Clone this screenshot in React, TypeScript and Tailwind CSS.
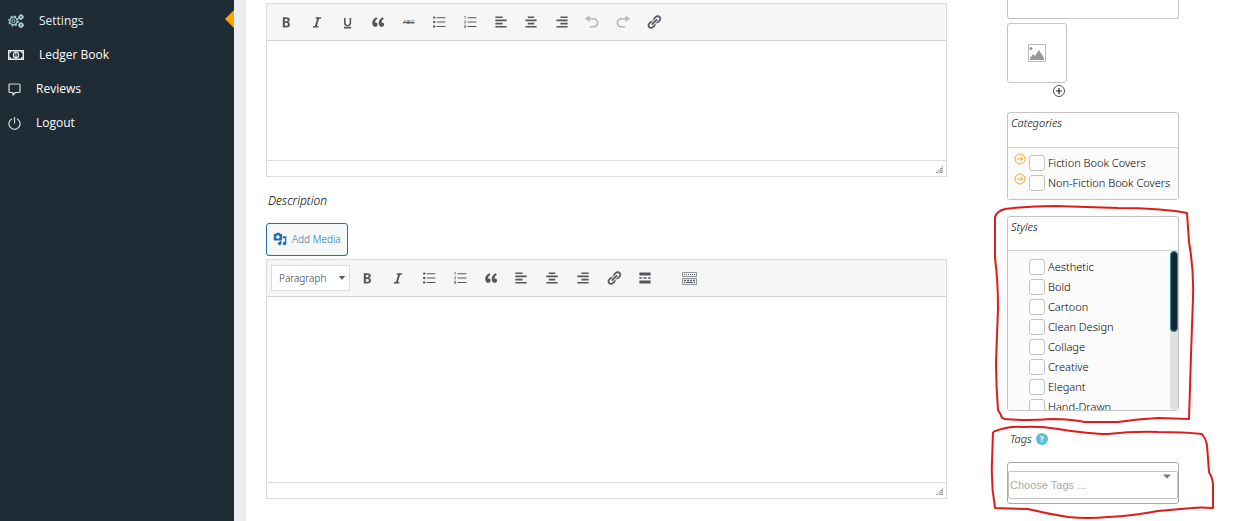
import type { ReactNode } from 'react';
import { FaCaretDown } from 'react-icons/fa';

type IconProps = { children: ReactNode; className?: string };

function Icon({ children, className = 'w-4 h-4' }: IconProps) {
  return (
    <svg viewBox="0 0 20 20" fill="currentColor" className={className} aria-hidden="true">
      {children}
    </svg>
  );
}

const icons: Record<string, ReactNode> = {
  Bold: (
    <path d="M6 4v13h4.54c1.37 0 2.46-.33 3.26-1 .8-.66 1.2-1.58 1.2-2.77 0-.84-.17-1.51-.51-2.01s-.9-.85-1.67-1.03v-.09c.57-.1 1.02-.4 1.36-.9s.51-1.13.51-1.91c0-1.14-.39-1.98-1.17-2.5C12.75 4.26 11.5 4 9.78 4H6zm2.57 5.15V6.26h1.36c.73 0 1.27.11 1.61.32.34.22.51.58.51 1.07 0 .54-.16.92-.47 1.15s-.82.35-1.51.35h-1.5zm0 2.19h1.6c1.44 0 2.16.53 2.16 1.61 0 .6-.17 1.05-.51 1.34s-.86.43-1.57.43H8.57v-3.38z" />
  ),
  Italic: <path d="M14.78 6h-2.13l-2.8 9h2.12l-.62 2H4.6l.62-2h2.14l2.8-9H8.03l.62-2h6.75z" />,
  Underline: (
    <path d="M14 5h-2v5.71c0 1.99-1.12 2.98-2.45 2.98-1.32 0-2.55-1-2.55-2.96V5H5v5.87c0 1.91 1 4.54 4.48 4.54 3.49 0 4.52-2.58 4.52-4.5V5zm0 13v-2H5v2h9z" />
  ),
  Blockquote: (
    <path d="M9.49 13.22c0-.74-.2-1.38-.61-1.9-.62-.78-1.83-.88-2.53-.72-.29-1.65 1.11-3.75 2.92-4.65L7.88 4c-2.73 1.3-5.42 4.28-4.96 8.05C3.21 14.43 4.59 16 6.54 16c.85 0 1.56-.25 2.12-.75s.83-1.18.83-2.03zm8.05 0c0-.74-.2-1.38-.61-1.9-.63-.78-1.83-.88-2.53-.72-.29-1.65 1.11-3.75 2.92-4.65L15.93 4c-2.73 1.3-5.41 4.28-4.95 8.05.29 2.38 1.66 3.95 3.61 3.95.85 0 1.56-.25 2.12-.75s.83-1.18.83-2.03z" />
  ),
  'Bulleted list': (
    <>
      <circle cx="4" cy="4.5" r="1.5" />
      <circle cx="4" cy="10" r="1.5" />
      <circle cx="4" cy="15.5" r="1.5" />
      <path d="M7 4h11v1.2H7zM7 9.4h11v1.2H7zM7 15h11v1.2H7z" />
    </>
  ),
  'Numbered list': (
    <>
      <path d="M7 4h11v1.2H7zM7 9.4h11v1.2H7zM7 15h11v1.2H7z" />
      <path
        d="M3 3l1-.5V6M2.8 8.5h1.6v1.4L3 11.3h1.7M2.8 14h1.7v1.5H3.2h1.3V17H2.8"
        fill="none"
        stroke="currentColor"
        strokeWidth="0.8"
      />
    </>
  ),
  'Align left': <path d="M12 5V3H3v2h9zm5 4V7H3v2h14zm-5 4v-2H3v2h9zm5 4v-2H3v2h14z" />,
  'Align center': <path d="M14 5V3H6v2h8zm3 4V7H3v2h14zm-3 4v-2H6v2h8zm3 4v-2H3v2h14z" />,
  'Align right': <path d="M17 5V3H8v2h9zm0 4V7H3v2h14zm0 4v-2H8v2h9zm0 4v-2H3v2h14z" />,
  Undo: <path d="M12 5H7V2L1 6l6 4V7h5c2.2 0 4 1.8 4 4s-1.8 4-4 4H7v2h5c3.3 0 6-2.7 6-6s-2.7-6-6-6z" />,
  Redo: <path d="M8 5h5V2l6 4-6 4V7H8c-2.2 0-4 1.8-4 4s1.8 4 4 4h5v2H8c-3.3 0-6-2.7-6-6s2.7-6 6-6z" />,
  'Insert link': (
    <path d="M17.74 2.76c1.68 1.69 1.68 4.41 0 6.1l-1.53 1.52c-1.12 1.12-2.7 1.47-4.14 1.09l2.62-2.61.76-.77.76-.76c.84-.84.84-2.2 0-3.04-.84-.85-2.2-.85-3.04 0l-.77.76-3.38 3.38c-.37-1.44-.02-3.02 1.1-4.14l1.52-1.53c1.69-1.68 4.42-1.68 6.1 0zM8.59 13.43l5.34-5.34c.42-.42.42-1.1 0-1.52-.44-.43-1.13-.39-1.53 0l-5.33 5.34c-.42.42-.42 1.1 0 1.52.44.43 1.13.39 1.52 0zm-.76 2.29l4.14-4.15c.38 1.44.03 3.02-1.09 4.14l-1.52 1.53c-1.69 1.68-4.41 1.68-6.1 0-1.68-1.68-1.68-4.42 0-6.1l1.53-1.52c1.12-1.12 2.7-1.47 4.14-1.1l-4.14 4.15c-.85.84-.85 2.2 0 3.05.84.84 2.2.84 3.04 0z" />
  ),
  'Read more': <path d="M3 3h14v4H3zM3 9h3v2H3zM8 9h4v2H8zM14 9h3v2h-3zM3 13h14v4H3z" />,
};

const basicTools = [
  'Bold',
  'Italic',
  'Underline',
  'Blockquote',
  'Strikethrough',
  'Bulleted list',
  'Numbered list',
  'Align left',
  'Align center',
  'Align right',
  'Undo',
  'Redo',
  'Insert link',
];

const richTools = [
  'Bold',
  'Italic',
  'Bulleted list',
  'Numbered list',
  'Blockquote',
  'Align left',
  'Align center',
  'Align right',
  'Insert link',
  'Read more',
];

const styleNames = [
  'Aesthetic',
  'Bold',
  'Cartoon',
  'Clean Design',
  'Collage',
  'Creative',
  'Elegant',
  'Hand-Drawn',
];

function ToolButton({ name }: { name: string }) {
  const disabled = name === 'Undo' || name === 'Redo';
  return (
    <button
      type="button"
      aria-label={name}
      disabled={disabled}
      className="flex h-7 items-center justify-center text-[#50575e] disabled:text-[#b5b8bb]"
    >
      {name === 'Strikethrough' ? (
        <span className="text-[6px] line-through">ABC</span>
      ) : (
        <Icon>{icons[name]}</Icon>
      )}
    </button>
  );
}

function Editor({ label, toolbar, bodyClass }: { label: string; toolbar: ReactNode; bodyClass: string }) {
  return (
    <div className="border border-[#dcdcdc] bg-white">
      <div className="flex h-[37px] items-center border-b border-[#d5d5d5] bg-[#f6f6f6] px-1">{toolbar}</div>
      <textarea aria-label={label} className={`block w-full resize-none p-2 outline-none ${bodyClass}`} />
      <div className="flex h-4 items-end justify-end border-t border-[#dcdcdc] p-[2px]">
        <svg viewBox="0 0 9 9" className="h-[9px] w-[9px]" fill="#a0a0a0" aria-hidden="true">
          <path d="M7 1h1v1H7zM5 3h3v1H5zM5 5h3v1H5zM3 5h1v1H3zM1 7h2v1H1zM4 7h4v1H4z" />
          <path d="M6 2h2v1H6zM4 4h4v1H4zM2 6h6v1H2z" opacity=".4" />
        </svg>
      </div>
    </div>
  );
}

function CheckRow({ name, arrow = false }: { name: string; arrow?: boolean }) {
  return (
    <label className="flex h-5 items-center text-[11px] font-light text-black">
      <span className="h-full w-[15px] text-[#f5a623]">
        {arrow && (
          <svg viewBox="0 0 12 12" className="h-3 w-3" fill="none" stroke="currentColor" aria-hidden="true">
            <circle cx="6" cy="6" r="5" />
            <path d="M3 6h5.5M6.3 3.6L8.7 6 6.3 8.4" />
          </svg>
        )}
      </span>
      <input
        type="checkbox"
        className="h-4 w-4 shrink-0 appearance-none rounded-[3px] border border-[#c4c4c4] bg-white checked:bg-[#1f2b35]"
      />
      <span className="ml-[3px] whitespace-nowrap">{name}</span>
    </label>
  );
}

function Sidebar() {
  return (
    <nav className="relative w-[234px] shrink-0 bg-[#1f2b35] pt-1 font-['Open_Sans',sans-serif] text-[12px] text-white">
      <a href="#settings" className="flex h-[34px] items-center gap-[15px] pl-2 text-[#e3f1f4]">
        <svg viewBox="0 0 16 14" className="h-[14px] w-4 text-[#a9cbd3]" fill="none" stroke="currentColor" aria-hidden="true">
          <circle cx="5.5" cy="7" r="3.7" strokeWidth="1.4" />
          <circle cx="5.5" cy="7" r="1.5" />
          <circle cx="5.5" cy="7" r="4.9" strokeWidth="1.2" strokeDasharray="2 1.85" />
          <circle cx="13" cy="3" r="1.7" strokeWidth="1.8" />
          <circle cx="13" cy="11" r="1.7" strokeWidth="1.8" />
          <path d="M10 3h1M15 3h1M13 0v1M13 5v1M10 11h1M15 11h1M13 8v1M13 13v1" />
        </svg>
        Settings
      </a>
      <svg viewBox="0 0 9 18" className="absolute right-0 top-[10px] h-[18px] w-[9px]" aria-hidden="true">
        <path d="M9 0v18L0 9z" fill="#ffa500" />
      </svg>
      <a href="#ledger" className="flex h-[34px] items-center gap-[15px] pl-2">
        <svg viewBox="0 0 16 10" className="h-[10px] w-4" fill="none" stroke="#e8ecec" aria-hidden="true">
          <path d="M.7.7h14.6v8.6H.7z" strokeWidth="1.4" />
          <path d="M1 3q2 0 2-2M15 3q-2 0-2-2M1 7q2 0 2 2M15 7q-2 0-2 2" />
          <ellipse cx="8" cy="5" rx="2.6" ry="2.9" strokeWidth="1.2" />
          <path d="M7 4l1-.6V7M7 7h2" strokeWidth=".8" />
        </svg>
        Ledger Book
      </a>
      <a href="#reviews" className="flex h-[34px] items-center gap-[15px] pl-2">
        <svg viewBox="0 0 13 13" className="h-[13px] w-[13px]" fill="none" stroke="#d5dada" strokeWidth="1.2" aria-hidden="true">
          <path d="M2 1h9q1 0 1 1v6.5q0 1-1 1H7.500L5 12V9.500H2q-1 0-1-1V2q0-1 1-1z" strokeLinejoin="round" />
        </svg>
        Reviews
      </a>
      <a href="#logout" className="flex h-[34px] items-center gap-[15px] pl-2">
        <svg viewBox="0 0 13 13" className="h-[13px] w-[13px]" fill="none" stroke="#d5dada" strokeWidth="1.2" aria-hidden="true">
          <path d="M4 1.700a5.600 5.600 0 1 0 5 0M6.500 0v6.500" />
        </svg>
        Logout
      </a>
    </nav>
  );
}

function RichToolbar() {
  return (
    <>
      <div className="relative">
        <select
          aria-label="Text format"
          className="block h-[26px] w-[79px] appearance-none border border-[#ddd] bg-white pl-[7px] text-[10px] font-light text-[#32373c]"
        >
          <option>Paragraph</option>
        </select>
        <svg viewBox="0 0 6 4" className="pointer-events-none absolute right-[5px] top-[11px] h-1 w-[6px]" fill="#50575e" aria-hidden="true">
          <path d="M0 0h6L3 4z" />
        </svg>
      </div>
      <div className="ml-[2px] grid w-[308px] grid-cols-10">
        {richTools.map((t) => (
          <ToolButton key={t} name={t} />
        ))}
      </div>
      <button type="button" aria-label="Toolbar toggle" className="ml-[22px] text-[#50575e]">
        <svg viewBox="0 0 15 13" className="h-[13px] w-[15px]" fill="none" stroke="currentColor" aria-hidden="true">
          <path d="M.5.5h14v4H.5zM.5 6.5h14v6H.5z" opacity=".6" />
          <path d="M2 2.5h11" strokeDasharray="1 1" />
          <path d="M2 8.5h11" strokeWidth="1.4" strokeDasharray="2 1" />
          <path d="M2 10.5h1M4 10.5h7M12 10.5h1" />
        </svg>
      </button>
    </>
  );
}

export default function App() {
  return (
    <div className="relative flex h-screen overflow-hidden bg-white font-['Noto_Sans',sans-serif] leading-4 text-black">
      <Sidebar />
      <div className="w-3 shrink-0 bg-[#ebebf0]" />
      <main className="flex min-w-0 flex-1 items-start gap-[60px] pl-5 pr-[59px]">
        <section className="min-w-0 flex-1 pt-[3px]">
          <Editor
            label="Short description"
            bodyClass="h-[119px]"
            toolbar={
              <div className="grid w-[398px] grid-cols-13">
                {basicTools.map((t) => (
                  <ToolButton key={t} name={t} />
                ))}
              </div>
            }
          />
          <h2 className="mt-4 pl-[2px] text-[12px] font-light italic">Description</h2>
          <button
            type="button"
            className="mt-[14px] flex h-[33px] items-center gap-[5px] rounded-[3px] border border-[#2271b1] bg-[#f6f7f7] px-[6px] pb-[2px] text-[10px] font-light text-[#2271b1]"
          >
            <Icon className="h-[14px] w-[14px]">
              <path d="M13 11V4c0-.55-.45-1-1-1h-1.67L9 1H5L3.67 3H2c-.55 0-1 .45-1 1v7c0 .55.45 1 1 1h10c.55 0 1-.45 1-1zM7 4.5c1.38 0 2.5 1.12 2.5 2.5S8.38 9.5 7 9.5 4.5 8.38 4.5 7 5.62 4.5 7 4.5zM14 6h5v10.5c0 1.38-1.12 2.5-2.5 2.5S14 17.88 14 16.5s1.12-2.5 2.5-2.5c.17 0 .34.02.5.05V9h-3V6zm-4 8.05V13h2v3.5c0 1.38-1.12 2.5-2.5 2.5S7 17.88 7 16.5 8.12 14 9.5 14c.17 0 .34.02.5.05z" />
            </Icon>
            Add Media
          </button>
          <div className="mt-[3px]">
            <Editor label="Description" bodyClass="h-[185px]" toolbar={<RichToolbar />} />
          </div>
        </section>

        <aside className="w-[172px] shrink-0">
          <div className="h-[19px] rounded-b-[3px] border border-t-0 border-[#c4c4c4]" />
          <div className="mt-1 w-[60px]">
            <button
              type="button"
              aria-label="Gallery image"
              className="flex h-[60px] w-full items-center justify-center rounded-[3px] border border-[#c4c4c4]"
            >
              <svg viewBox="0 0 18 18" className="h-[18px] w-[18px]" aria-hidden="true">
                <path d="M.5.5h17v17H.5z" fill="#fff" stroke="#bbb" />
                <circle cx="3" cy="4.5" r="1.5" fill="#999" />
                <path d="M2 16v-2l3-4 2 2 4-6 5 8v2z" fill="#999" />
              </svg>
            </button>
            <button type="button" aria-label="Add image" className="ml-auto mr-[2px] mt-[2px] block h-3 w-3">
              <svg viewBox="0 0 12 12" className="h-3 w-3" fill="none" stroke="#222" aria-hidden="true">
                <circle cx="6" cy="6" r="5.5" strokeWidth=".8" />
                <path d="M3 6h6M6 3v6" strokeWidth="1.2" />
              </svg>
            </button>
          </div>

          <fieldset className="mt-[15px] rounded-[3px] border border-[#c4c4c4] text-[11px]">
            <div className="h-[34px] pl-[3px] pt-[2px] font-light italic">Categories</div>
            <div className="border-t border-[#d5d5d5] bg-[#fbfbfb] pb-[6px] pl-[6px] pt-[5px]">
              <CheckRow name="Fiction Book Covers" arrow />
              <CheckRow name="Non-Fiction Book Covers" arrow />
            </div>
          </fieldset>

          <fieldset className="mt-4 rounded-[3px] border border-[#c4c4c4] text-[11px]">
            <div className="h-[33px] pl-[3px] pt-[2px] font-light italic">Styles</div>
            <div className="flex h-[160px] overflow-hidden border-t border-[#d5d5d5] bg-[#fbfbfb]">
              <div className="flex-1 overflow-hidden pl-[6px] pt-[6px]">
                {styleNames.map((name) => (
                  <CheckRow key={name} name={name} />
                ))}
              </div>
              <div className="w-2 rounded-full bg-[#e0e0e0]">
                <div className="h-[81px] rounded-full border border-[#2a8a9b] bg-[#162833]" />
              </div>
            </div>
          </fieldset>

          <div className="mt-5 flex items-center gap-1 pl-[3px] text-[11px]">
            <label htmlFor="tags" className="font-light italic">
              Tags
            </label>
            <button
              type="button"
              aria-label="Help"
              className="flex h-3 w-3 items-center justify-center rounded-full bg-[#5bc0de] text-[8px] font-bold text-white"
            >
              ?
            </button>
          </div>
          <div className="relative mt-[15px] rounded-[3px] border border-[#aaa] pb-1 pt-2">
            <input
              id="tags"
              placeholder="Choose Tags ..."
              className="block h-7 w-full rounded-[2px] border border-[#c4c4c4] pl-px font-['Liberation_Sans',sans-serif] text-[11px] outline-none placeholder:text-[#aaa]"
            />
            <FaCaretDown className="pointer-events-none absolute right-[5px] top-[7px] h-3 w-3 text-[#777]" />
          </div>
        </aside>
      </main>

      {/* hand-drawn markers around Styles and Tags */}
      <svg
        viewBox="0 0 228 316"
        className="pointer-events-none absolute right-[20px] top-[205px] h-[316px] w-[228px]"
        fill="none"
        stroke="#e01b1b"
        strokeWidth="2"
        strokeLinejoin="round"
        aria-hidden="true"
      >
        <path d="M5 53L5 12Q7 6 15 4Q38 1 65 1L128 3Q170 3 197 8L199 37Q204 65 203 93L201 150L199 214L168 213Q148 214 128 217L95 217Q80 214 62 214Q35 216 15 214Q11 213 11 210L8 205Q6 180 6 157L8 103Q8 75 5 53" />
        <path d="M3 227Q18 221 32 222Q50 221 68 224Q100 229 118 229Q145 226 168 227Q195 227 212 229Q216 234 217 240L219 267Q223 274 223 280L223 303Q210 302 202 303L168 306Q142 311 118 312Q98 314 78 312Q58 309 38 304L5 303Q1 280 2 257L3 227" />
      </svg>
    </div>
  );
}
